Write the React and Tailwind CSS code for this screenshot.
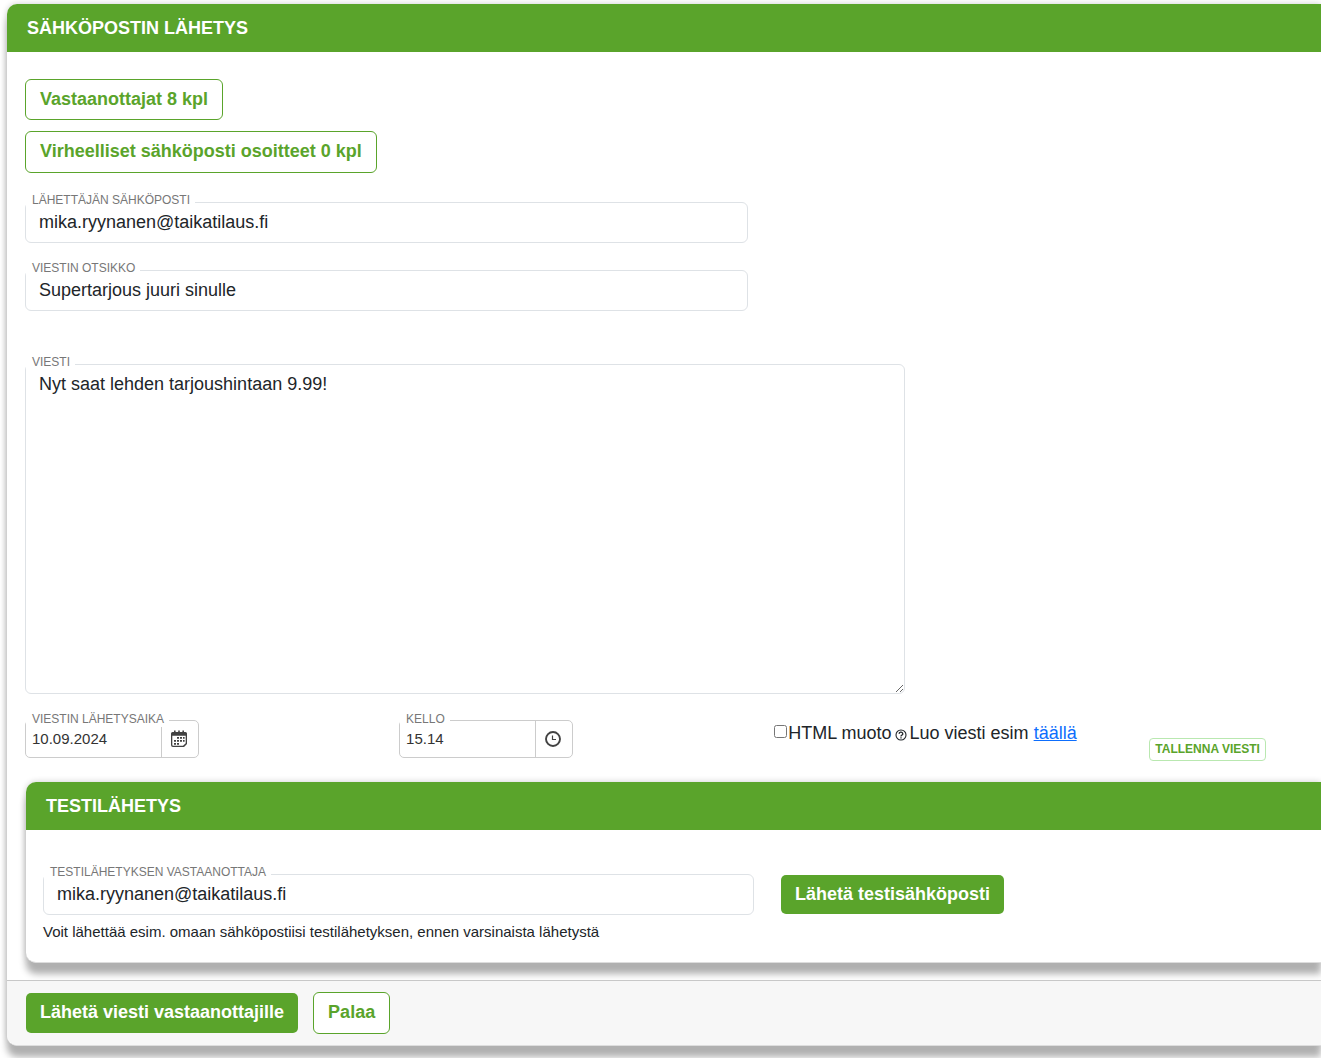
import React, { useState } from 'react';

const labelClass =
  'absolute left-px top-[-10px] bg-white pt-px pl-[6px] pr-[5px] text-[12px] leading-[15px] uppercase text-[#777777] whitespace-nowrap';
const inputClass =
  'block w-full rounded-md border border-[#dee2e6] bg-white px-[13px] text-[18px] text-[#212529] outline-none';
const outlineButton =
  'rounded-md border border-[#5aa42b] bg-white px-[14px] pb-[2px] text-[18px] leading-[24px] font-bold text-[#5aa42b]';
const solidButton =
  'rounded-[5px] bg-[#5aa42b] px-[14px] pb-[2px] text-[18px] leading-[24px] font-bold text-white';
const cardClass =
  'rounded-l-[10px] border-b border-[#dddddd] bg-white shadow-[0_11px_7px_#b0b0b0,0_0_6px_rgba(0,0,0,0.2)]';
const cardTitle =
  'rounded-tl-[10px] bg-[#5aa42b] px-5 text-[18px] leading-[48px] font-bold text-white uppercase';

const CalendarIcon = () => (
  <svg width="18" height="18" viewBox="0 0 18 18" fill="#424242" aria-hidden="true">
    <path
      fillRule="evenodd"
      d="M2.500 2h13a1.500 1.500 0 0 1 1.500 1.500V14l-3 3H3a2 2 0 0 1-2-2V3.500A1.500 1.500 0 0 1 2.500 2zM2.300 5.700V15a.8.8 0 0 0 .8.8H13l2.700-2.500V5.700z"
    />
    <path d="M4 .6h1.600V2H4zM8.200.6h1.600V2H8.200zM12.400.6H14V2h-1.600z" />
    <path d="M7 7h2v1.800H7zM10 7h2v1.800h-2zM13 7h1.600v1.800H13zM4 10h2v1.800H4zM7 10h2v1.800H7zM10 10h2v1.800h-2zM13 10h1.600v1.800H13zM4 13h2v1.800H4zM7 13h2v1.800H7z" />
  </svg>
);

const ClockIcon = () => (
  <svg width="18" height="18" viewBox="0 0 18 18" fill="none" stroke="#424242" aria-hidden="true">
    <circle cx="9" cy="9" r="7" strokeWidth="1.900" />
    <path d="M8.500 5.500v4H12" strokeWidth="1.200" />
  </svg>
);

const HelpIcon = () => (
  <svg width="12" height="12" viewBox="0 0 12 12" fill="none" stroke="#212529" aria-hidden="true">
    <circle cx="6" cy="6" r="5" strokeWidth="1.100" />
    <path d="M4.200 4.900a1.800 1.600 0 1 1 2.600 1.300Q6 6.500 6 7.500" strokeWidth="1.300" />
    <path d="M6 8.300v1.200" strokeWidth="1.300" />
  </svg>
);

const TextField = ({ id, label, type = 'text', value, onChange }) => (
  <div className="relative">
    <input
      id={id}
      type={type}
      value={value}
      onChange={(e) => onChange(e.target.value)}
      className={`${inputClass} h-[41px]`}
    />
    <label htmlFor={id} className={labelClass}>
      {label}
    </label>
  </div>
);

const PickerField = ({ id, label, buttonLabel, icon, value, onChange }) => (
  <div className="relative flex h-[38px] w-[174px] rounded-[5px] border border-[#cccccc] bg-white">
    <input
      id={id}
      type="text"
      value={value}
      onChange={(e) => onChange(e.target.value)}
      className="min-w-0 flex-1 bg-transparent px-[6px] text-[15px] text-[#333333] outline-none"
    />
    <button
      type="button"
      aria-label={buttonLabel}
      className="flex w-[37px] items-center justify-center border-l border-[#cccccc] pr-[2px]"
    >
      {icon}
    </button>
    <label htmlFor={id} className={`${labelClass} -ml-px`}>
      {label}
    </label>
  </div>
);

const App = () => {
  const [sender, setSender] = useState('mika.ryynanen@taikatilaus.fi');
  const [subject, setSubject] = useState('Supertarjous juuri sinulle');
  const [message, setMessage] = useState('Nyt saat lehden tarjoushintaan 9.99!');
  const [date, setDate] = useState('10.09.2024');
  const [time, setTime] = useState('15.14');
  const [html, setHtml] = useState(false);
  const [testRecipient, setTestRecipient] = useState('mika.ryynanen@taikatilaus.fi');

  return (
    <main className="overflow-hidden bg-white pt-1 pb-3 pl-[7px] font-['Liberation_Sans',Arial,sans-serif] text-[#212529]">
      <section className={cardClass}>
        <h1 className={cardTitle}>Sähköpostin lähetys</h1>

        <div className="pt-[27px] pb-[17px] pl-[18px]">
          <div className="flex flex-col items-start gap-[11px]">
            <button type="button" className={`${outlineButton} h-[41px]`}>
              Vastaanottajat 8 kpl
            </button>
            <button type="button" className={`${outlineButton} h-[42px]`}>
              Virheelliset sähköposti osoitteet 0 kpl
            </button>
          </div>

          <div className="mt-[29px] flex max-w-[723px] flex-col gap-[27px]">
            <TextField id="sender" label="Lähettäjän sähköposti" type="email" value={sender} onChange={setSender} />
            <TextField id="subject" label="Viestin otsikko" value={subject} onChange={setSubject} />
          </div>

          <div className="relative mt-[53px] max-w-[880px]">
            <textarea
              id="message"
              value={message}
              onChange={(e) => setMessage(e.target.value)}
              className={`${inputClass} h-[330px] resize py-[6px] leading-[27px]`}
            />
            <label htmlFor="message" className={labelClass}>
              Viesti
            </label>
          </div>

          <div className="mt-[26px] grid grid-cols-[29%_29%_29%_1fr] items-start pr-[6px]">
            <PickerField
              id="date"
              label="Viestin lähetysaika"
              buttonLabel="Avaa kalenteri"
              icon={<CalendarIcon />}
              value={date}
              onChange={setDate}
            />
            <PickerField
              id="time"
              label="Kello"
              buttonLabel="Valitse kellonaika"
              icon={<ClockIcon />}
              value={time}
              onChange={setTime}
            />
            <div className="flex items-center text-[18px] leading-[26px] whitespace-nowrap">
              <input
                id="html"
                type="checkbox"
                checked={html}
                onChange={(e) => setHtml(e.target.checked)}
                className="mr-px mb-[3px] ml-px size-[13px]"
              />
              <label htmlFor="html">HTML muoto</label>
              <span className="mx-[3px] pt-[3px]">
                <HelpIcon />
              </span>
              <span>
                Luo viesti esim{' '}
                <a href="#editor" className="text-[#0d6efd] underline">
                  täällä
                </a>
              </span>
            </div>
            <button
              type="button"
              className="mt-[18px] ml-[2px] h-[23px] justify-self-start rounded-[4px] border border-[#b9e8b0] bg-white px-[5px] pb-[2px] text-[12px] leading-[16px] font-bold whitespace-nowrap text-[#5aa42b] uppercase"
            >
              Tallenna viesti
            </button>
          </div>

          <section className={`${cardClass} mt-[21px] ml-px`}>
            <h2 className={cardTitle}>Testilähetys</h2>
            <div className="pt-[44px] pb-[19px] pl-[17px]">
              <div className="flex items-center gap-[27px]">
                <div className="w-full max-w-[711px]">
                  <TextField
                    id="test-recipient"
                    label="Testilähetyksen vastaanottaja"
                    type="email"
                    value={testRecipient}
                    onChange={setTestRecipient}
                  />
                </div>
                <button type="button" className={`${solidButton} h-[39px] shrink-0`}>
                  Lähetä testisähköposti
                </button>
              </div>
              <p className="mt-[6px] text-[15px] leading-[22px]">
                Voit lähettää esim. omaan sähköpostiisi testilähetyksen, ennen varsinaista lähetystä
              </p>
            </div>
          </section>
        </div>

        <footer className="relative flex items-center gap-[15px] rounded-bl-[10px] border-t border-[#c8c8c8] bg-[#f7f7f7] py-[11px] pl-[19px]">
          <button type="button" className={`${solidButton} h-[40px]`}>
            Lähetä viesti vastaanottajille
          </button>
          <button type="button" className={`${outlineButton} h-[42px]`}>
            Palaa
          </button>
        </footer>
      </section>
    </main>
  );
};

export default App;
